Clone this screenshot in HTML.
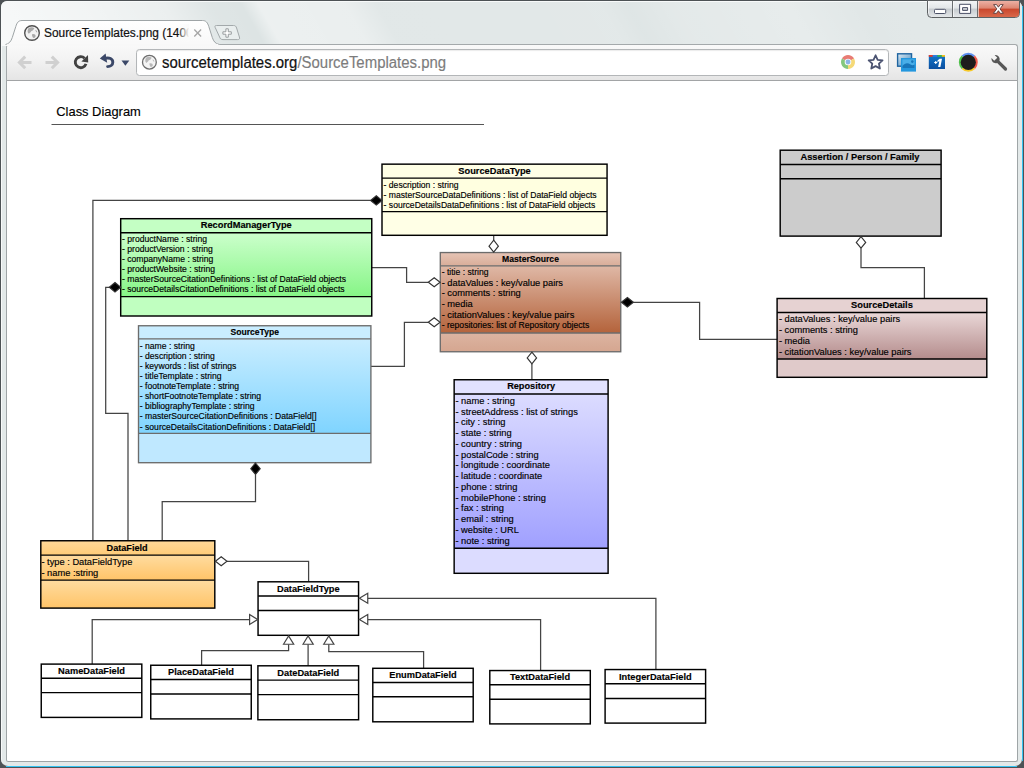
<!DOCTYPE html>
<html><head><meta charset="utf-8"><title>SourceTemplates.png</title>
<style>
html,body{margin:0;padding:0;width:1024px;height:768px;overflow:hidden;background:#4d5255;font-family:"Liberation Sans", sans-serif;}
#frame{position:absolute;left:1px;top:1px;width:1021px;height:765px;border-radius:6px 6px 7px 7px;background:#e3e9e9;
 box-shadow: inset 1px 1px 0 rgba(255,255,255,.75);}
#glass{position:absolute;left:2px;top:2px;width:1020px;height:44px;border-radius:5px 5px 0 0;
 background:linear-gradient(60deg, rgba(255,255,255,.78) 0px, rgba(255,255,255,.62) 90px, rgba(255,255,255,.42) 160px, rgba(255,255,255,.06) 200px, rgba(255,255,255,0) 228px, rgba(255,255,255,.46) 243px, rgba(255,255,255,.40) 318px, rgba(255,255,255,.14) 346px, rgba(255,255,255,.17) 540px, rgba(255,255,255,.06) 562px, rgba(255,255,255,.2) 600px, rgba(255,255,255,.3) 700px, rgba(255,255,255,.12) 760px, rgba(255,255,255,.22) 906px), #dde4e4;}
#cyR{position:absolute;left:1022px;top:6px;width:1px;height:755px;background:#35c3f2}
#cyB{position:absolute;left:6px;top:766px;width:1011px;height:1px;background:#35c3f2}
#page{position:absolute;left:6px;top:80px;width:1010px;height:681px;background:#fff;border:1px solid #9fa5a7;border-top:none;border-radius:0 0 2.5px 2.5px}
#toolbar{position:absolute;left:6px;top:44px;width:1010px;height:35px;border:1px solid #a4a9ab;border-bottom:1px solid #a2a4a6;border-radius:3px 3px 0 0;
 background:linear-gradient(#f9f9f9,#f3f3f3 40%,#e5e5e5)}
#omni{position:absolute;left:136px;top:49px;width:751px;height:25px;border:1px solid #b3b6b8;border-radius:3.5px;background:#fff;box-shadow:inset 0 1px 1px rgba(0,0,0,.08)}
#url{position:absolute;left:162px;top:53px;font-size:16px;line-height:20px;white-space:nowrap;color:#111;-webkit-text-stroke:0.22px #111;transform-origin:0 0;transform:scaleX(.934)}
#url span{color:#7c7c7c;-webkit-text-stroke:0.15px #7c7c7c}
#tabtitle{position:absolute;left:44px;top:25px;width:145px;height:17px;overflow:hidden;font-size:12px;line-height:17px;white-space:nowrap;color:#111;-webkit-text-stroke:0.2px #111}
#tabtitle i{font-style:normal;display:inline-block;transform-origin:0 0;transform:scaleX(.99)}
#tabfade{position:absolute;left:178px;top:24px;width:11px;height:18px;background:linear-gradient(90deg,rgba(250,250,250,0),rgba(250,250,250,1))}
#chromesvg{position:absolute;left:0;top:0}

</style></head><body>
<div id="frame"></div><div id="glass"></div><div id="cyR"></div><div id="cyB"></div>
<div id="page"></div>
<div id="toolbar"></div>
<div id="omni"></div>
<svg id="chromesvg" width="1024" height="100" viewBox="0 0 1024 100">
<defs>
<linearGradient id="tabg" x1="0" y1="0" x2="0" y2="1"><stop offset="0" stop-color="#ffffff"/><stop offset="1" stop-color="#f8f8f8"/></linearGradient>
<linearGradient id="btng" x1="0" y1="0" x2="0" y2="1"><stop offset="0" stop-color="#f4f6f7"/><stop offset=".45" stop-color="#e2e6e8"/><stop offset=".5" stop-color="#c6cbcf"/><stop offset="1" stop-color="#e6e9eb"/></linearGradient>
<linearGradient id="clsg" x1="0" y1="0" x2="0" y2="1"><stop offset="0" stop-color="#ecb0a4"/><stop offset=".45" stop-color="#dd8672"/><stop offset=".5" stop-color="#c9472d"/><stop offset="1" stop-color="#d9684a"/></linearGradient>
<linearGradient id="p1g" x1="0" y1="0" x2="0" y2="1"><stop offset="0" stop-color="#1275c8"/><stop offset="1" stop-color="#0b4fa0"/></linearGradient>
<linearGradient id="imgb" x1="0" y1="0" x2="1" y2="1"><stop offset="0" stop-color="#dfeaf2"/><stop offset="1" stop-color="#3d86bd"/></linearGradient>
</defs>
<!-- tab -->
<path d="M5.5 44.5 C9 43.8 11 41.5 12.3 37.5 L15.8 26.5 C17 22.5 18.5 20.5 22 20.5 H202.5 C206 20.5 207.5 22.5 208.8 26.5 L212.3 37.5 C213.6 41.5 215.5 43.8 219.5 44.5 V46 H5.5Z" fill="url(#tabg)"/><path d="M5.5 44.5 C9 43.8 11 41.5 12.3 37.5 L15.8 26.5 C17 22.5 18.5 20.5 22 20.5 H202.5 C206 20.5 207.5 22.5 208.8 26.5 L212.3 37.5 C213.6 41.5 215.5 43.8 219.5 44.5" fill="none" stroke="#9ea4a6" stroke-width="1"/>
<rect x="7.2" y="43.9" width="211" height="1.4" fill="#f8f8f8"/>
<!-- new tab button -->
<path d="M216.5 25.5 H233.5 C235.3 25.5 236 26.2 236.6 28 L239.4 37 C240 39 239.3 39.6 237.5 39.6 H223 C221 39.6 220.2 38.8 219.6 37 L215.2 27.5 C214.6 26 215 25.5 216.5 25.5Z" fill="#e9eeee" stroke="#a3a9ab" stroke-width="1"/>
<path d="M225.9 28.8h2.4v3h3v2.4h-3v3h-2.4v-3h-3v-2.4h3z" fill="#fff" stroke="#8e9496" stroke-width=".9"/>
<!-- tab favicon globe -->
<g transform="translate(32 33)"><circle r="7.3" fill="#f2f2f2" stroke="#505050" stroke-width="1.4"/>
<path d="M-3.6 -4.8 C-1.5 -6.2 1.2 -6 2.4 -4.8 C1.6 -3.2 0.8 -2.4 -0.6 -2 C-1 -0.6 -2.4 -0.4 -3 0.8 C-4.4 0.2 -5 -2 -3.6 -4.8Z M0.2 1.2 C2 0.6 3.8 1.6 3.6 3.2 C3.2 4.8 1.6 5.6 0.8 4.6 C0.6 3.4 -0.4 2.4 0.2 1.2Z M3.4 -3.2 C4.6 -2.6 5.4 -1.4 5.2 -0.4 C4.2 -0.8 3.4 -1.8 3.4 -3.2Z" fill="#a9a9a9"/></g>
<!-- tab close x -->
<path d="M194.3 29.6l6.8 6.8M201.1 29.6l-6.8 6.8" stroke="#a6a6a6" stroke-width="1.35"/>
<!-- back / forward -->
<path d="M31.5 62.4H20.6M25.2 56.6L19.4 62.4L25.2 68.2" fill="none" stroke="#d0d0d0" stroke-width="3"/>
<path d="M45.5 62.4H56.4M51.8 56.6L57.6 62.4L51.8 68.2" fill="none" stroke="#d0d0d0" stroke-width="3"/>
<!-- reload -->
<path d="M84.6 58.2 A5.5 5.5 0 1 0 86 63.9" fill="none" stroke="#424242" stroke-width="2.9"/>
<path d="M81.4 61.6L88.2 62.6L88 55Z" fill="#424242"/>
<!-- undo -->
<path d="M104.5 58.4 C109.5 57 112.8 59 112.8 62.2 C112.8 65 110.4 66.6 107.6 66.6" fill="none" stroke="#3b4868" stroke-width="2.9" stroke-linecap="round"/>
<path d="M99.8 58.6L105.6 53.6L107.2 62.8Z" fill="#3b4868"/>
<path d="M121.5 60.6H129.3L125.4 65.8Z" fill="#3b4868"/>
<!-- omnibox globe -->
<g transform="translate(149.4 62.2)"><circle r="6.9" fill="#f4f4f4" stroke="#6e6e6e" stroke-width="1.3"/>
<path d="M-3.4 -4.5 C-1.4 -5.8 1.1 -5.6 2.3 -4.5 C1.5 -3 0.8 -2.3 -0.6 -1.9 C-1 -0.6 -2.3 -0.4 -2.8 0.8 C-4.1 0.2 -4.7 -1.9 -3.4 -4.5Z M0.2 1.1 C1.9 0.6 3.6 1.5 3.4 3 C3 4.5 1.5 5.3 0.8 4.3 C0.6 3.2 -0.4 2.3 0.2 1.1Z M3.2 -3 C4.3 -2.4 5.1 -1.3 4.9 -0.4 C4 -0.8 3.2 -1.7 3.2 -3Z" fill="#b8b8b8"/></g>
<!-- chrome icon (pale) -->
<g transform="translate(848 62)" opacity=".78">
<path d="M0 0L-6.06 -3.5A7 7 0 0 1 6.06 -3.5Z" fill="#e2574c"/>
<path d="M0 0L6.06 -3.5A7 7 0 0 1 0 7Z" fill="#f3cf52"/>
<path d="M0 0L0 7A7 7 0 0 1 -6.06 -3.5Z" fill="#62b85a"/>
<circle r="3.3" fill="#f4f7fb"/><circle r="2.4" fill="#6a9fe0"/></g>
<!-- star -->
<path d="M875.60 55.30 L877.66 59.77 L882.54 60.34 L878.93 63.68 L879.89 68.51 L875.60 66.10 L871.31 68.51 L872.27 63.68 L868.66 60.34 L873.54 59.77Z" fill="#fff" stroke="#4b5371" stroke-width="1.8" stroke-linejoin="round"/>
<!-- image icon -->
<rect x="897.6" y="53.8" width="13.95" height="12.4" fill="url(#imgb)" stroke="#1f64a0" stroke-width="1.4"/>
<rect x="901" y="58" width="15" height="13.6" fill="#2497de"/>
<rect x="902.4" y="59.4" width="12.2" height="8.6" fill="#49aee8"/>
<path d="M902.4 66 C905 62.5 908 62.5 910.5 64.5 C912 65.6 913.4 65.4 914.6 64.6 V68H902.4Z" fill="#1876ba"/>
<circle cx="912.3" cy="61.6" r="1.3" fill="#1876ba"/>
<!-- +1 icon -->
<rect x="928.8" y="55" width="16.2" height="14" fill="url(#p1g)"/>
<rect x="928.8" y="55" width="4" height="1.8" fill="#e23a2e"/><rect x="932.8" y="55" width="4.6" height="1.8" fill="#2d7de0"/><rect x="937.4" y="55" width="4.4" height="1.8" fill="#3bb44a"/><rect x="941.8" y="55" width="3.2" height="1.8" fill="#f2c21a"/>
<path d="M934.2 61.9h1v-1h1.1v1h1v1.1h-1v1h-1.1v-1h-1z M939.7 58.8H942L940.4 66.9H938.1L939.3 61.3L937.3 62L937.7 60.2Z" fill="#fff"/>
<!-- black circle w/ ring -->
<g transform="translate(968.3 62.3)">
<path d="M0 0L-6.7 -6.7A9.5 9.5 0 0 1 6.7 -6.7Z" fill="#5b8ff0"/>
<path d="M0 0L6.7 -6.7A9.5 9.5 0 0 1 6.7 6.7Z" fill="#f05a4e"/>
<path d="M0 0L6.7 6.7A9.5 9.5 0 0 1 -6.7 6.7Z" fill="#f7c928"/>
<path d="M0 0L-6.7 6.7A9.5 9.5 0 0 1 -6.7 -6.7Z" fill="#4fc04a"/>
<circle r="7.6" fill="#1d1d1d"/></g>
<!-- wrench -->
<g transform="translate(999 62.5) rotate(-45)">
<path d="M-1.6 -1 V9.2 A1.6 1.6 0 0 0 1.6 9.2 V-1 A4.3 4.3 0 0 0 2.2 -8.4 V-4.6 H-2.2 V-8.4 A4.3 4.3 0 0 0 -1.6 -1Z" fill="#575757"/></g>
<!-- window buttons -->
<path d="M927.5 0.5 V13.5 A4 4 0 0 0 931.5 17.5 H1015.5 A4 4 0 0 0 1019.5 13.5 V0.5Z" fill="url(#btng)" stroke="#5d6163" stroke-width="1"/>
<path d="M977.5 1 H1019 V13.5 A3.5 3.5 0 0 1 1015.5 17 H977.5Z" fill="url(#clsg)"/>
<path d="M952.5 1V17M977.5 1V17" stroke="#6a6e70" stroke-width="1"/>
<path d="M953.5 1V17M978.5 1V17M928.5 1V13" stroke="rgba(255,255,255,.6)" stroke-width="1"/>
<rect x="934.5" y="9.3" width="11.2" height="4.2" rx="1" fill="#fff" stroke="#4a5066" stroke-width="1"/>
<path d="M959.6 4.3H970.6V13.4H959.6Z M962.6 7.6V10.4H967.6V7.6Z" fill="#fff" fill-rule="evenodd" stroke="#4a5066" stroke-width="1"/>
<path d="M993.6 4.6H996.6L998.4 7.2L1000.2 4.6H1003.2L1000 8.9L1003.4 13.3H1000.3L998.4 10.7L996.5 13.3H993.4L996.8 8.9Z" fill="#fff" stroke="#5a3a3a" stroke-width=".9"/>
</svg>
<div id="tabtitle"><i>SourceTemplates.png (1400 x 1000)</i></div><div id="tabfade"></div>
<div id="url">sourcetemplates.org<span>/SourceTemplates.png</span></div>

<svg id="dia" width="1024" height="768" viewBox="0 0 1024 768" style="position:absolute;left:0;top:0" font-family='"Liberation Sans", sans-serif' fill="#000">
<defs><linearGradient id="gGreen" x1="0" y1="0" x2="0" y2="1"><stop offset="0" stop-color="#ccffcc"/><stop offset="1" stop-color="#86f586"/></linearGradient><linearGradient id="gBlue" x1="0" y1="0" x2="0" y2="1"><stop offset="0" stop-color="#c9edff"/><stop offset="1" stop-color="#7fd4ff"/></linearGradient><linearGradient id="gBrown" x1="0" y1="0" x2="0" y2="1"><stop offset="0" stop-color="#dfb8a6"/><stop offset="1" stop-color="#b4633b"/></linearGradient><linearGradient id="gBrownH" x1="0" y1="0" x2="0" y2="1"><stop offset="0" stop-color="#e6c4b5"/><stop offset="1" stop-color="#d9ad99"/></linearGradient><linearGradient id="gPurple" x1="0" y1="0" x2="0" y2="1"><stop offset="0" stop-color="#dcdcff"/><stop offset="1" stop-color="#a0a0ff"/></linearGradient><linearGradient id="gRose" x1="0" y1="0" x2="0" y2="1"><stop offset="0" stop-color="#ead8d8"/><stop offset="1" stop-color="#b48c8c"/></linearGradient><linearGradient id="gOrange" x1="0" y1="0" x2="0" y2="1"><stop offset="0" stop-color="#ffdca0"/><stop offset="1" stop-color="#ffc468"/></linearGradient><linearGradient id="gOrangeH" x1="0" y1="0" x2="0" y2="1"><stop offset="0" stop-color="#ffd898"/><stop offset="1" stop-color="#ffcc78"/></linearGradient><linearGradient id="gBrownB" x1="0" y1="0" x2="0" y2="1"><stop offset="0" stop-color="#dcb4a1"/><stop offset="1" stop-color="#d5a690"/></linearGradient></defs>
<text x="56.3" y="116" font-size="12.9" stroke="#000" stroke-width="0.15">Class Diagram</text>
<path d="M51.5 124.5H484" stroke="#555" stroke-width="1"/>
<g></g>
<g id="conn"><path d="M92.9 540.75 L92.9 200.4 L370.6 200.4" fill="none" stroke="#444" stroke-width="1.25"/><path d="M128 540.75 L128 413.4 L105.7 413.4 L105.7 287.3 L109.3 287.3" fill="none" stroke="#444" stroke-width="1.25"/><path d="M162.2 540.75 L162.2 501.6 L255.5 501.6 L255.5 474.4" fill="none" stroke="#444" stroke-width="1.25"/><path d="M371.75 267.6 L406.6 267.6 L406.6 282.3 L428.3 282.3" fill="none" stroke="#444" stroke-width="1.25"/><path d="M370.9 366.4 L404.4 366.4 L404.4 322.3 L428.3 322.3" fill="none" stroke="#444" stroke-width="1.25"/><path d="M493.7 235.3 L493.7 240.2" fill="none" stroke="#444" stroke-width="1.25"/><path d="M633.4 302.25 L699.6 302.25 L699.6 339.3 L777.1 339.3" fill="none" stroke="#444" stroke-width="1.25"/><path d="M531.9 363.75 L531.9 379.75" fill="none" stroke="#444" stroke-width="1.25"/><path d="M861 248.2 L861 267.7 L924.4 267.7 L924.4 298.5" fill="none" stroke="#444" stroke-width="1.25"/><path d="M227 561.3 L308.6 561.3 L308.6 581.8" fill="none" stroke="#444" stroke-width="1.25"/><path d="M92.2 664.1 L92.2 619.5 L249.6 619.5" fill="none" stroke="#444" stroke-width="1.25"/><path d="M201.6 665.25 L201.6 650.5 L288.6 650.5 L288.6 644.25" fill="none" stroke="#444" stroke-width="1.25"/><path d="M308.1 665.8 L308.1 644.25" fill="none" stroke="#444" stroke-width="1.25"/><path d="M423.6 668.3 L423.6 651.6 L328.8 651.6 L328.8 644.25" fill="none" stroke="#444" stroke-width="1.25"/><path d="M540.6 670.55 L540.6 619.5 L367.75 619.5" fill="none" stroke="#444" stroke-width="1.25"/><path d="M655.9 669.55 L655.9 598.25 L367.75 598.25" fill="none" stroke="#444" stroke-width="1.25"/></g>
<g id="boxes"><rect x="382" y="164.15" width="225.05999999999995" height="13.949999999999989" fill="#ffffe6"/><rect x="382" y="178.1" width="225.05999999999995" height="33.5" fill="#ffffe0"/><rect x="382" y="211.6" width="225.05999999999995" height="23.700000000000017" fill="#ffffe6"/><rect x="382" y="164.15" width="225.05999999999995" height="71.15" fill="none" stroke="#000" stroke-width="1.45"/><path d="M382 178.1H607.06M382 211.6H607.06" stroke="#000" stroke-width="1.45" fill="none"/><rect x="120.7" y="218.7" width="251.05" height="13.950000000000017" fill="#c4ffc4"/><rect x="120.7" y="232.65" width="251.05" height="63.95000000000002" fill="url(#gGreen)"/><rect x="120.7" y="296.6" width="251.05" height="19.399999999999977" fill="#c0ffc0"/><rect x="120.7" y="218.7" width="251.05" height="97.30000000000001" fill="none" stroke="#000" stroke-width="1.45"/><path d="M120.7 232.65H371.75M120.7 296.6H371.75" stroke="#000" stroke-width="1.45" fill="none"/><rect x="138.5" y="325.75" width="232.39999999999998" height="13.149999999999977" fill="#c9edff"/><rect x="138.5" y="338.9" width="232.39999999999998" height="94.5" fill="url(#gBlue)"/><rect x="138.5" y="433.4" width="232.39999999999998" height="29.30000000000001" fill="#bfe8ff"/><rect x="138.5" y="325.75" width="232.39999999999998" height="136.95" fill="none" stroke="#6c6c6c" stroke-width="1.35"/><path d="M138.5 338.9H370.9M138.5 433.4H370.9" stroke="#6c6c6c" stroke-width="1.35" fill="none"/><rect x="440.3" y="252.55" width="180.45" height="13.349999999999966" fill="url(#gBrownH)"/><rect x="440.3" y="265.9" width="180.45" height="67.10000000000002" fill="url(#gBrown)"/><rect x="440.3" y="333" width="180.45" height="18.75" fill="url(#gBrownB)"/><rect x="440.3" y="252.55" width="180.45" height="99.19999999999999" fill="none" stroke="#6c6c6c" stroke-width="1.35"/><path d="M440.3 265.9H620.75M440.3 333H620.75" stroke="#6c6c6c" stroke-width="1.35" fill="none"/><rect x="454.15" y="379.75" width="153.95000000000005" height="14.149999999999977" fill="#e2e2ff"/><rect x="454.15" y="393.9" width="153.95000000000005" height="154.35000000000002" fill="url(#gPurple)"/><rect x="454.15" y="548.25" width="153.95000000000005" height="25.049999999999955" fill="#dcdcff"/><rect x="454.15" y="379.75" width="153.95000000000005" height="193.54999999999995" fill="none" stroke="#000" stroke-width="1.45"/><path d="M454.15 393.9H608.1M454.15 548.25H608.1" stroke="#000" stroke-width="1.45" fill="none"/><rect x="780.2" y="150.2" width="160.89999999999998" height="14.300000000000011" fill="#ccc"/><rect x="780.2" y="164.5" width="160.89999999999998" height="14.25" fill="#ccc"/><rect x="780.2" y="178.75" width="160.89999999999998" height="57.349999999999994" fill="#ccc"/><rect x="780.2" y="150.2" width="160.89999999999998" height="85.9" fill="none" stroke="#000" stroke-width="1.45"/><path d="M780.2 164.5H941.1M780.2 178.75H941.1" stroke="#000" stroke-width="1.45" fill="none"/><rect x="777.1" y="298.5" width="209.69999999999993" height="14.0" fill="#e6d2d2"/><rect x="777.1" y="312.5" width="209.69999999999993" height="46.5" fill="url(#gRose)"/><rect x="777.1" y="359" width="209.69999999999993" height="18.30000000000001" fill="#e0caca"/><rect x="777.1" y="298.5" width="209.69999999999993" height="78.80000000000001" fill="none" stroke="#000" stroke-width="1.45"/><path d="M777.1 312.5H986.8M777.1 359H986.8" stroke="#000" stroke-width="1.45" fill="none"/><rect x="40.8" y="540.75" width="174.0" height="14.350000000000023" fill="url(#gOrangeH)"/><rect x="40.8" y="555.1" width="174.0" height="25.0" fill="url(#gOrange)"/><rect x="40.8" y="580.1" width="174.0" height="28.0" fill="url(#gOrange)"/><rect x="40.8" y="540.75" width="174.0" height="67.35000000000002" fill="none" stroke="#000" stroke-width="1.45"/><path d="M40.8 555.1H214.8M40.8 580.1H214.8" stroke="#000" stroke-width="1.45" fill="none"/><rect x="258.06" y="581.8" width="100.5" height="14.259999999999991" fill="#fff"/><rect x="258.06" y="596.06" width="100.5" height="14.5" fill="#fff"/><rect x="258.06" y="610.56" width="100.5" height="24.74000000000001" fill="#fff"/><rect x="258.06" y="581.8" width="100.5" height="53.5" fill="none" stroke="#000" stroke-width="1.45"/><path d="M258.06 596.06H358.56M258.06 610.56H358.56" stroke="#000" stroke-width="1.45" fill="none"/><rect x="41.25" y="664.1" width="100.55000000000001" height="14.100000000000023" fill="#fff"/><rect x="41.25" y="678.2" width="100.55000000000001" height="14.399999999999977" fill="#fff"/><rect x="41.25" y="692.6" width="100.55000000000001" height="24.799999999999955" fill="#fff"/><rect x="41.25" y="664.1" width="100.55000000000001" height="53.299999999999955" fill="none" stroke="#000" stroke-width="1.45"/><path d="M41.25 678.2H141.8M41.25 692.6H141.8" stroke="#000" stroke-width="1.45" fill="none"/><rect x="150.75" y="665.25" width="100.5" height="14.149999999999977" fill="#fff"/><rect x="150.75" y="679.4" width="100.5" height="14.600000000000023" fill="#fff"/><rect x="150.75" y="694" width="100.5" height="24.899999999999977" fill="#fff"/><rect x="150.75" y="665.25" width="100.5" height="53.64999999999998" fill="none" stroke="#000" stroke-width="1.45"/><path d="M150.75 679.4H251.25M150.75 694H251.25" stroke="#000" stroke-width="1.45" fill="none"/><rect x="257.9" y="665.8" width="100.70000000000005" height="14.300000000000068" fill="#fff"/><rect x="257.9" y="680.1" width="100.70000000000005" height="14.5" fill="#fff"/><rect x="257.9" y="694.6" width="100.70000000000005" height="25.149999999999977" fill="#fff"/><rect x="257.9" y="665.8" width="100.70000000000005" height="53.950000000000045" fill="none" stroke="#000" stroke-width="1.45"/><path d="M257.9 680.1H358.6M257.9 694.6H358.6" stroke="#000" stroke-width="1.45" fill="none"/><rect x="372.8" y="668.3" width="100.39999999999998" height="14.200000000000045" fill="#fff"/><rect x="372.8" y="682.5" width="100.39999999999998" height="14.25" fill="#fff"/><rect x="372.8" y="696.75" width="100.39999999999998" height="25.049999999999955" fill="#fff"/><rect x="372.8" y="668.3" width="100.39999999999998" height="53.5" fill="none" stroke="#000" stroke-width="1.45"/><path d="M372.8 682.5H473.2M372.8 696.75H473.2" stroke="#000" stroke-width="1.45" fill="none"/><rect x="489.8" y="670.55" width="100.49999999999994" height="14.25" fill="#fff"/><rect x="489.8" y="684.8" width="100.49999999999994" height="14.450000000000045" fill="#fff"/><rect x="489.8" y="699.25" width="100.49999999999994" height="24.649999999999977" fill="#fff"/><rect x="489.8" y="670.55" width="100.49999999999994" height="53.35000000000002" fill="none" stroke="#000" stroke-width="1.45"/><path d="M489.8 684.8H590.3M489.8 699.25H590.3" stroke="#000" stroke-width="1.45" fill="none"/><rect x="605.1" y="669.55" width="100.5" height="14.25" fill="#fff"/><rect x="605.1" y="683.8" width="100.5" height="14.600000000000023" fill="#fff"/><rect x="605.1" y="698.4" width="100.5" height="24.700000000000045" fill="#fff"/><rect x="605.1" y="669.55" width="100.5" height="53.55000000000007" fill="none" stroke="#000" stroke-width="1.45"/><path d="M605.1 683.8H705.6M605.1 698.4H705.6" stroke="#000" stroke-width="1.45" fill="none"/></g>
<g id="heads"><path d="M370.6 200.4L376.3 195.70000000000002L382 200.4L376.3 205.1Z" fill="#000" stroke="#333" stroke-width="1.15"/><path d="M109.3 287.3L115.0 282.6L120.7 287.3L115.0 292.0Z" fill="#000" stroke="#333" stroke-width="1.15"/><path d="M255.5 463L260.2 468.7L255.5 474.4L250.8 468.7Z" fill="#000" stroke="#333" stroke-width="1.15"/><path d="M428.3 282.3L434.20000000000005 277.8L440.1 282.3L434.20000000000005 286.8Z" fill="#fff" stroke="#333" stroke-width="1.15"/><path d="M428.3 322.3L434.20000000000005 317.8L440.1 322.3L434.20000000000005 326.8Z" fill="#fff" stroke="#333" stroke-width="1.15"/><path d="M493.7 240.2L498.4 246.14999999999998L493.7 252.1L489.0 246.14999999999998Z" fill="#fff" stroke="#333" stroke-width="1.15"/><path d="M621.4 302.25L627.4 297.55L633.4 302.25L627.4 306.95Z" fill="#000" stroke="#333" stroke-width="1.15"/><path d="M531.9 352.1L536.6 357.925L531.9 363.75L527.1999999999999 357.925Z" fill="#fff" stroke="#333" stroke-width="1.15"/><path d="M861 236.7L865.7 242.45L861 248.2L856.3 242.45Z" fill="#fff" stroke="#333" stroke-width="1.15"/><path d="M215.4 561.3L221.2 556.8L227 561.3L221.2 565.8Z" fill="#fff" stroke="#333" stroke-width="1.15"/><path d="M249.6 614.6 L257.6 619.5 L249.6 624.4Z" fill="#fff" stroke="#444" stroke-width="1.2"/><path d="M283.5 644.25 L288.6 636 L293.7 644.25Z" fill="#fff" stroke="#444" stroke-width="1.2"/><path d="M303 644.25 L308.1 636 L313.2 644.25Z" fill="#fff" stroke="#444" stroke-width="1.2"/><path d="M323.7 644.25 L328.8 636 L333.9 644.25Z" fill="#fff" stroke="#444" stroke-width="1.2"/><path d="M367.75 614.6 L359.4 619.5 L367.75 624.4Z" fill="#fff" stroke="#444" stroke-width="1.2"/><path d="M367.75 593.35 L359.4 598.25 L367.75 603.15Z" fill="#fff" stroke="#444" stroke-width="1.2"/></g>
<g id="txt" stroke="#000" stroke-width="0.15"><text x="494.53" y="174" font-size="9.28" font-weight="bold" text-anchor="middle">SourceDataType</text><text x="383.6" y="188" font-size="8.6">- description : string</text><text x="383.6" y="198" font-size="8.6">- masterSourceDataDefinitions : list of DataField objects</text><text x="383.6" y="208" font-size="8.6">- sourceDetailsDataDefinitions : list of DataField objects</text><text x="246.225" y="228" font-size="9.28" font-weight="bold" text-anchor="middle">RecordManagerType</text><text x="122" y="242" font-size="8.6">- productName : string</text><text x="122" y="252" font-size="8.6">- productVersion : string</text><text x="122" y="262" font-size="8.6">- companyName : string</text><text x="122" y="272" font-size="8.6">- productWebsite : string</text><text x="122" y="282" font-size="8.6">- masterSourceCitationDefinitions : list of DataField objects</text><text x="122" y="292" font-size="8.6">- sourceDetailsCitationDefinitions : list of DataField objects</text><text x="254.7" y="335" font-size="8.6" font-weight="bold" text-anchor="middle">SourceType</text><text x="139.8" y="349" font-size="8.6">- name : string</text><text x="139.8" y="359" font-size="8.6">- description : string</text><text x="139.8" y="369" font-size="8.6">- keywords : list of strings</text><text x="139.8" y="379" font-size="8.6">- titleTemplate : string</text><text x="139.8" y="389" font-size="8.6">- footnoteTemplate : string</text><text x="139.8" y="399" font-size="8.6">- shortFootnoteTemplate : string</text><text x="139.8" y="409" font-size="8.6">- bibliographyTemplate : string</text><text x="139.8" y="419" font-size="8.6">- masterSourceCitationDefinitions : DataField[]</text><text x="139.8" y="430" font-size="8.6">- sourceDetailsCitationDefinitions : DataField[]</text><text x="530.525" y="262" font-size="8.6" font-weight="bold" text-anchor="middle">MasterSource</text><text x="441.7" y="275" font-size="8.6">- titie : string</text><text x="441.7" y="286" font-size="9.3">- dataValues : key/value pairs</text><text x="441.7" y="296" font-size="9.3">- comments : string</text><text x="441.7" y="307" font-size="9.3">- media</text><text x="441.7" y="318" font-size="9.3">- citationValues : key/value pairs</text><text x="441.7" y="328" font-size="8.6">- repositories: list of Repository objects</text><text x="531.125" y="389" font-size="9.2" font-weight="bold" text-anchor="middle">Repository</text><text x="455.4" y="404" font-size="9.3">- name : string</text><text x="455.4" y="415" font-size="9.3">- streetAddress : list of strings</text><text x="455.4" y="425" font-size="9.3">- city : string</text><text x="455.4" y="436" font-size="9.3">- state : string</text><text x="455.4" y="447" font-size="9.3">- country : string</text><text x="455.4" y="458" font-size="9.3">- postalCode : string</text><text x="455.4" y="468" font-size="9.3">- longitude : coordinate</text><text x="455.4" y="479" font-size="9.3">- latitude : coordinate</text><text x="455.4" y="490" font-size="9.3">- phone : string</text><text x="455.4" y="501" font-size="9.3">- mobilePhone : string</text><text x="455.4" y="511" font-size="9.3">- fax : string</text><text x="455.4" y="522" font-size="9.3">- email : string</text><text x="455.4" y="533" font-size="9.3">- website : URL</text><text x="455.4" y="544" font-size="9.3">- note : string</text><text x="860" y="160" font-size="9.28" font-weight="bold" text-anchor="middle">Assertion / Person / Family</text><text x="881.95" y="308" font-size="9.28" font-weight="bold" text-anchor="middle">SourceDetails</text><text x="778.9" y="322" font-size="9.3">- dataValues : key/value pairs</text><text x="778.9" y="333" font-size="9.3">- comments : string</text><text x="778.9" y="344" font-size="9.3">- media</text><text x="778.9" y="355" font-size="9.3">- citationValues : key/value pairs</text><text x="127.1" y="551" font-size="9.15" font-weight="bold" text-anchor="middle">DataField</text><text x="41.4" y="565" font-size="9.3">- type : DataFieldType</text><text x="41.4" y="576" font-size="9.3">- name :string</text><text x="308.31" y="592" font-size="9.28" font-weight="bold" text-anchor="middle">DataFieldType</text><text x="91.525" y="674" font-size="9.28" font-weight="bold" text-anchor="middle">NameDataField</text><text x="201.0" y="675" font-size="9.28" font-weight="bold" text-anchor="middle">PlaceDataField</text><text x="308.25" y="676" font-size="9.28" font-weight="bold" text-anchor="middle">DateDataField</text><text x="423.0" y="678" font-size="9.28" font-weight="bold" text-anchor="middle">EnumDataField</text><text x="540.05" y="680" font-size="9.28" font-weight="bold" text-anchor="middle">TextDataField</text><text x="655.35" y="680" font-size="9.28" font-weight="bold" text-anchor="middle">IntegerDataField</text></g>
</svg>
</body></html>
